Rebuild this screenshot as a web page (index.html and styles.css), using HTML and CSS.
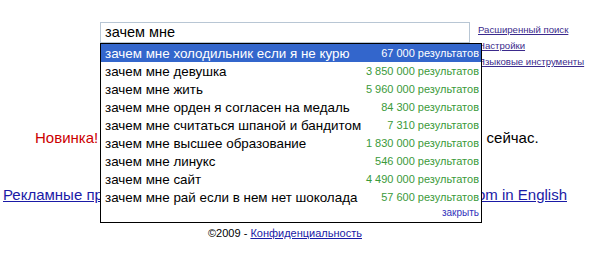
FILE: index.html
```html
<!DOCTYPE html>
<html lang="ru">
<head>
  <meta charset="UTF-8">
  <title>Google</title>
  <link rel="stylesheet" href="styles.css">
</head>
<body>
<div class="top">
  <div class="search">
    <div class="query">зачем мне</div>
    <div class="suggest">
      <div class="row active"><span class="q">зачем мне холодильник если я не курю</span><span class="n">67 000 результатов</span></div>
      <div class="row"><span class="q">зачем мне девушка</span><span class="n">3 850 000 результатов</span></div>
      <div class="row"><span class="q">зачем мне жить</span><span class="n">5 960 000 результатов</span></div>
      <div class="row"><span class="q">зачем мне орден я согласен на медаль</span><span class="n">84 300 результатов</span></div>
      <div class="row"><span class="q">зачем мне считаться шпаной и бандитом</span><span class="n">7 310 результатов</span></div>
      <div class="row"><span class="q">зачем мне высшее образование</span><span class="n">1 830 000 результатов</span></div>
      <div class="row"><span class="q">зачем мне линукс</span><span class="n">546 000 результатов</span></div>
      <div class="row"><span class="q">зачем мне сайт</span><span class="n">4 490 000 результатов</span></div>
      <div class="row"><span class="q">зачем мне рай если в нем нет шоколада</span><span class="n">57 600 результатов</span></div>
      <div class="close"><a href="#">закрыть</a></div>
    </div>
  </div>
  <div class="side">
    <a href="#">Расширенный поиск</a>
    <a href="#">Настройки</a>
    <a href="#">Языковые инструменты</a>
  </div>
</div>

<div class="news"><span class="red">Новинка!</span> <a class="promo" href="#">Google Chrome — быстрый браузер</a> сейчас.</div>

<div class="links"><a href="#">Рекламные программы</a><a href="#">Google.com in English</a></div>

<div class="foot">©2009 - <a href="#">Конфиденциальность</a></div>
</body>
</html>
```

FILE: styles.css
```css
body {
  margin: 0;
  background: #fff;
  color: #000;
  font-family: "Liberation Sans", Arial, sans-serif;
}
a {
  color: #1a1aa6;
}
.top {
  display: flex;
  padding: 22px 0 0 100px;
  height: 60px;
}
.search {
  position: relative;
  width: 370px;
}
.query {
  height: 19px;
  border: 1px solid #b8c6d4;
  padding-left: 4px;
  font-size: 14.5px;
  line-height: 19px;
}
.suggest {
  position: absolute;
  top: 21px;
  left: 0;
  width: 380px;
  background: #fff;
  border: 1px solid #000;
  z-index: 10;
}
.row {
  display: flex;
  justify-content: space-between;
  align-items: center;
  height: 18px;
  padding: 0 2px 0 4px;
  white-space: nowrap;
}
.row .q {
  font-size: 13.4px;
}
.row .n {
  font-size: 11px;
  color: #3a9a3a;
}
.row.active {
  background: #3366cc;
  color: #fff;
}
.row.active .n {
  color: #fff;
}
.close {
  text-align: right;
  padding: 0 2px 2px 0;
  height: 14px;
  font-size: 10px;
  line-height: 14px;
}
.close a {
  color: #3333bb;
  text-decoration: none;
}
.side {
  display: flex;
  flex-direction: column;
  padding: 0 0 0 8px;
  font-size: 9.6px;
  line-height: 16px;
  white-space: nowrap;
}
.side a {
  color: #3b2a8c;
}
.news {
  margin-top: 47px;
  padding-left: 35px;
  font-size: 15px;
  white-space: nowrap;
}
.promo {
  display: inline-block;
  width: 380px;
  overflow: hidden;
  vertical-align: bottom;
}
.red {
  color: #cc0000;
}
.links {
  display: flex;
  justify-content: space-between;
  margin-top: 40px;
  padding: 0 33px 0 3px;
  font-size: 15px;
  white-space: nowrap;
}
.foot {
  margin-top: 24px;
  padding-right: 30px;
  text-align: center;
  font-size: 11px;
}
```
